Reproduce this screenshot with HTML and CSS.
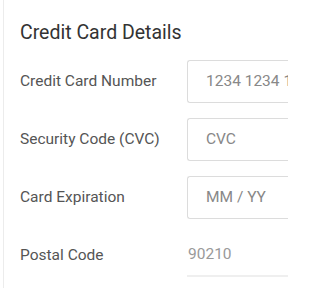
FILE: index.html
```html
<!DOCTYPE html>
<html>
<head>
<meta charset="utf-8">
<link rel="stylesheet" href="styles.css">
</head>
<body>
<div class="panel">
  <h2 class="title">Credit Card Details</h2>
  <div class="row">
    <div class="label">Credit Card Number</div>
    <div class="field boxed"><span class="clip">1234 1234 1234 1234</span></div>
  </div>
  <div class="row">
    <div class="label">Security Code (CVC)</div>
    <div class="field boxed">CVC</div>
  </div>
  <div class="row">
    <div class="label">Card Expiration</div>
    <div class="field boxed">MM / YY</div>
  </div>
  <div class="row">
    <div class="label">Postal Code</div>
    <div class="field plain">90210</div>
  </div>
</div>
</body>
</html>
```
FILE: styles.css
```css
html, body {
  margin: 0;
  padding: 0;
  background: #fff;
  overflow: hidden;
}
body {
  width: 288px;
  height: 288px;
  font-family: Roboto, "Liberation Sans", sans-serif;
}
.panel {
  margin-left: 3px;
  border-left: 1px solid #ececec;
  height: 288px;
  padding: 21px 0 0 16px;
  box-sizing: border-box;
  overflow: hidden;
}
.title {
  margin: 0 0 7px 0;
  font-size: 19.5px;
  font-weight: 400;
  color: #333;
  line-height: 24px;
}
.row {
  display: flex;
  align-items: center;
  height: 58px;
  white-space: nowrap;
}
.label {
  width: 167px;
  flex: none;
  font-size: 15.5px;
  color: #555;
}
.field {
  flex: none;
  width: 101px;
  font-size: 15.5px;
  color: #888;
  box-sizing: border-box;
  overflow: hidden;
}
.boxed {
  height: 43px;
  line-height: 41px;
  border: 1px solid #dcdcdc;
  border-right: none;
  border-radius: 3px 0 0 3px;
  padding-left: 18px;
}
.plain {
  height: 43px;
  line-height: 41px;
  padding-left: 1px;
  color: #999;
  border-bottom: 2px solid #efefef;
}
```
